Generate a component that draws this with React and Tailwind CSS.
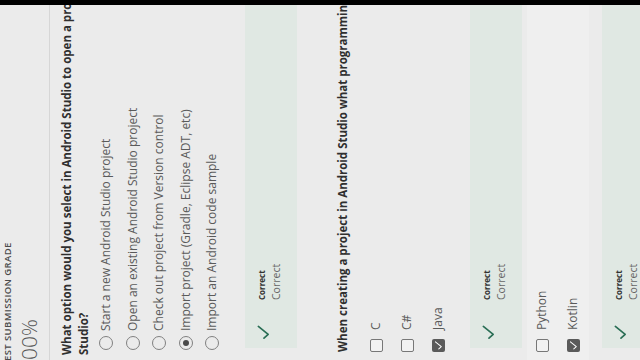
import React from 'react';

const radioOptions = [
  { label: 'Start a new Android Studio project', checked: false },
  { label: 'Open an existing Android Studio project', checked: false },
  { label: 'Check out project from Version control', checked: false },
  { label: 'Import project (Gradle, Eclipse ADT, etc)', checked: true },
  { label: 'Import an Android code sample', checked: false },
];

const CheckMark = ({ className }) => (
  <svg viewBox="0 0 16 16" className={className} fill="none" stroke="currentColor" strokeWidth="1.8" strokeLinecap="round" strokeLinejoin="round">
    <path d="M2 8.5 L6 13 L14.5 2.5" />
  </svg>
);

const Radio = ({ checked }) => (
  <span className="w-[14px] h-[14px] rounded-full border-[1.5px] border-[#808080] flex items-center justify-center shrink-0">
    {checked && <span className="w-[6px] h-[6px] rounded-full bg-[#4a4a4a]" />}
  </span>
);

const Checkbox = ({ checked }) =>
  checked ? (
    <span className="w-[13px] h-[13px] rounded-[2px] bg-[#5a5a5a] flex items-center justify-center shrink-0">
      <CheckMark className="w-[9px] h-[9px] text-white" />
    </span>
  ) : (
    <span className="w-[13px] h-[13px] rounded-[2px] border-[1.5px] border-[#777] bg-[#f2f2f2] shrink-0" />
  );

const Feedback = ({ className }) => (
  <div className={`ml-[12px] h-[52px] bg-[#e0e8e3] flex items-start pl-[8px] pt-[10px] ${className}`}>
    <CheckMark className="w-[15px] h-[15px] text-[#2a6e55] mt-[1px]" />
    <div className="ml-[25px] flex flex-col">
      <span className="text-[8px] leading-[13px] font-bold text-[#333]">Correct</span>
      <span className="text-[10.5px] leading-[17px] text-[#666]">Correct</span>
    </div>
  </div>
);

const CheckRow = ({ label, checked }) => (
  <div className="flex items-center h-[31px] ml-[8px]">
    <Checkbox checked={checked} />
    <span className="ml-[9px] text-[12px] text-[#5a5a5a]">{label}</span>
  </div>
);

export default function App() {
  return (
    <div className="relative w-[640px] h-[360px] overflow-hidden bg-[#ebebeb] font-['Open_Sans',sans-serif]">
      {/* the page is photographed on its side */}
      <div className="w-[360px] h-[640px] origin-top-left -rotate-90 translate-y-[360px] flex">
        <div className="w-[355px] h-full overflow-hidden">
          <div className="w-[640px]">
            {/* Grade */}
            <div className="h-[50px] pt-[2px] border-b border-[#d6d6d6]">
              <div className="-ml-[19px] text-[9.5px] leading-[11px] font-semibold tracking-[0.4px] text-[#4a4a4a] uppercase">
                Latest Submission Grade
              </div>
              <div className="-ml-[12px] mt-[3px] text-[21px] leading-[26px] font-light text-[#555]">100%</div>
            </div>

            {/* Question 1 */}
            <div className="ml-[5px] mt-[8px] text-[11.5px] leading-[17px] font-bold text-[#2f2f2f]">
              <div className="whitespace-nowrap">
                What option would you select in Android Studio to open a project that was created with another IDE or build system in Android
              </div>
              <div>Studio?</div>
            </div>
            <div className="mt-[1px]">
              {radioOptions.map((o) => (
                <div key={o.label} className="flex items-center h-[26.5px] ml-[10px]">
                  <Radio checked={o.checked} />
                  <span className="ml-[5px] text-[12px] text-[#5a5a5a]">{o.label}</span>
                </div>
              ))}
            </div>
            <Feedback className="mt-[19px]" />

            {/* Question 2 */}
            <div className="ml-[8px] mt-[37px] text-[11.5px] leading-[17px] font-bold text-[#2f2f2f] whitespace-nowrap">
              When creating a project in Android Studio what programming languages can you choose from?
            </div>
            <div className="mt-[10px]">
              <CheckRow label="C" checked={false} />
              <CheckRow label="C#" checked={false} />
              <CheckRow label="Java" checked />
            </div>
            <Feedback className="mt-[16px]" />
            <div className="mt-[5px] bg-[#efefef]">
              <CheckRow label="Python" checked={false} />
              <CheckRow label="Kotlin" checked />
            </div>
            <Feedback className="mt-[13px]" />
          </div>
        </div>
        <div className="w-[5px] h-full bg-black" />
      </div>
    </div>
  );
}
